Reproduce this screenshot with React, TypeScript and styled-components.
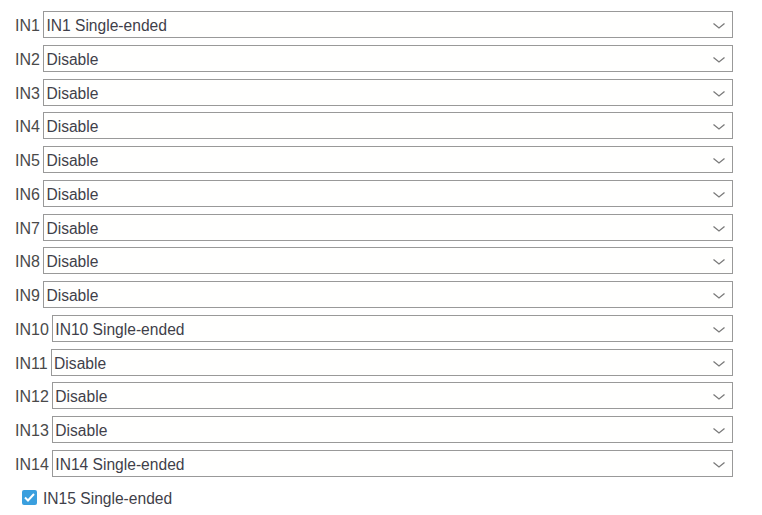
import React from 'react';
import styled, { createGlobalStyle } from 'styled-components';

const GlobalStyle = createGlobalStyle`
  body {
    margin: 0;
    background: #ffffff;
    font-family: 'Liberation Sans', Arial, sans-serif;
  }
`;

const Page = styled.div`
  width: 762px;
  height: 515px;
  box-sizing: border-box;
  padding: 11px 29px 0 15px;
  display: flex;
  flex-direction: column;
  gap: 6.77px;
`;

const Row = styled.div`
  display: flex;
  align-items: center;
  height: 27px;
`;

const Label = styled.span`
  font-size: 16px;
  color: #4a4a4a;
  margin-right: 3.5px;
  padding-top: 3px;
  white-space: nowrap;
`;

const SelectBox = styled.div`
  flex: 1;
  height: 27px;
  box-sizing: border-box;
  border: 1px solid #999999;
  background: #fffffe;
  display: flex;
  align-items: center;
  justify-content: space-between;
  padding: 0 6px 0 2px;
  font-size: 15.6px;
  color: #3f3f4a;
`;

const Value = styled.span`
  padding-top: 3px;
`;

const ChevronWrap = styled.span`
  display: flex;
  padding-top: 3px;
`;

const Chevron = () => (
  <ChevronWrap>
    <svg width="14" height="8" viewBox="0 0 14 8">
      <polyline points="1.5,1.5 7,6 12.5,1.5" fill="none" stroke="#7a7a7a" strokeWidth="1.3" />
    </svg>
  </ChevronWrap>
);

const CheckRow = styled.label`
  display: flex;
  align-items: center;
  gap: 6px;
  margin: 3px 0 0 7px;
  font-size: 15.6px;
  color: #3f3f4a;
`;

const CheckBox = styled.span`
  width: 15px;
  height: 15px;
  background: #3a9fde;
  border-radius: 2px;
  display: flex;
  align-items: center;
  justify-content: center;
`;

const rows: [string, string][] = [
  ['IN1', 'IN1 Single-ended'],
  ['IN2', 'Disable'],
  ['IN3', 'Disable'],
  ['IN4', 'Disable'],
  ['IN5', 'Disable'],
  ['IN6', 'Disable'],
  ['IN7', 'Disable'],
  ['IN8', 'Disable'],
  ['IN9', 'Disable'],
  ['IN10', 'IN10 Single-ended'],
  ['IN11', 'Disable'],
  ['IN12', 'Disable'],
  ['IN13', 'Disable'],
  ['IN14', 'IN14 Single-ended'],
];

export default function App() {
  return (
    <>
      <GlobalStyle />
      <Page>
        {rows.map(([name, value]) => (
          <Row key={name}>
            <Label>{name}</Label>
            <SelectBox>
              <Value>{value}</Value>
              <Chevron />
            </SelectBox>
          </Row>
        ))}
        <CheckRow>
          <CheckBox>
            <svg width="11" height="9" viewBox="0 0 11 9">
              <polyline points="1,4.5 4,7.5 10,1" fill="none" stroke="#ffffff" strokeWidth="2" />
            </svg>
          </CheckBox>
          <Value>IN15 Single-ended</Value>
        </CheckRow>
      </Page>
    </>
  );
}
